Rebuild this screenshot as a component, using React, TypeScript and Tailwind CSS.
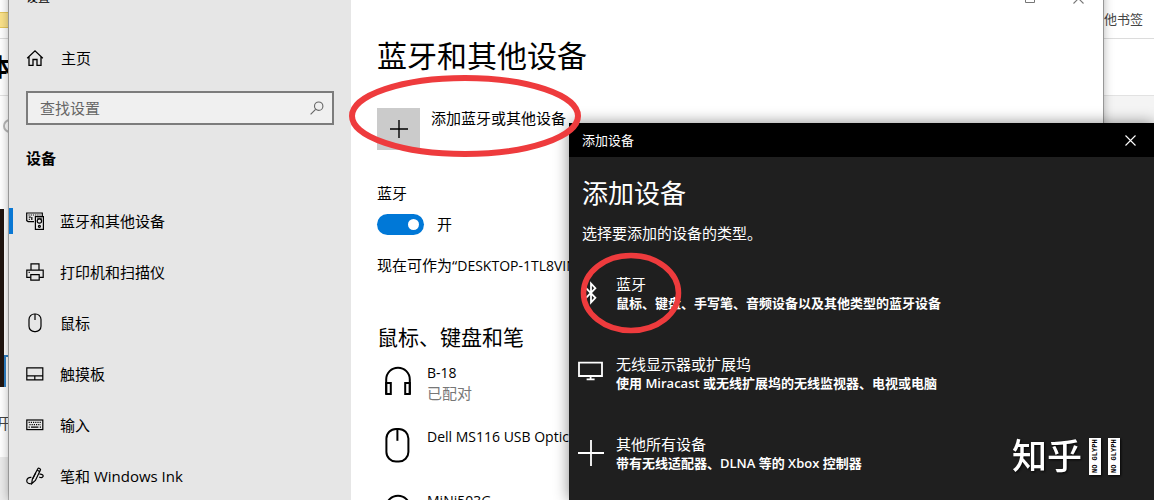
import { useState } from "react";
import type { ReactNode } from "react";

interface NavItem {
  label: string;
  icon: ReactNode;
}

interface DeviceType {
  title: string;
  detail: string;
  icon: ReactNode;
}

const line = { fill: "none", stroke: "currentColor" };

const HomeIcon = () => (
  <svg width="18" height="18" viewBox="0 0 18 18" {...line} strokeWidth="1.3">
    <path d="M1.2 9.2 9 1.8l7.8 7.4M3 7.8V16.3h4V10.5h4v5.8h4V7.8" />
  </svg>
);

const SearchIcon = () => (
  <svg width="14" height="14" viewBox="0 0 14 14" {...line} strokeWidth="1.1">
    <circle cx="8.7" cy="5.2" r="4.2" />
    <path d="M5.6 8.3.6 13.3" />
  </svg>
);

const DevicesIcon = () => (
  <svg width="18" height="18" viewBox="0 0 18 18" {...line} strokeWidth="1.2">
    <path d="M8 9.6H2.2L.7 8.6V1h15.6v3" />
    <path d="M2.5 3h12" strokeDasharray="1.2 1" />
    <path d="M2.8 5.2h2M2.8 7.4h1M5.8 5v3" />
    <rect x="9.4" y="4.6" width="8" height="12.8" />
    <circle cx="13.4" cy="9" r="2.2" />
    <circle cx="13.4" cy="14.3" r="1" />
    <path d="M11 6.2h5" strokeWidth=".8" />
  </svg>
);

const PrinterIcon = () => (
  <svg width="18" height="18" viewBox="0 0 18 18" {...line} strokeWidth="1.2">
    <path d="M5 7V.8h8V7" />
    <path d="M4.6 14.4H.8V7.2h16.4v7.2h-3.8" />
    <path d="M4.8 11.6h8.4v5.6H4.8z" />
    <path d="M2.6 9.4h1.2" />
  </svg>
);

const MouseIcon = () => (
  <svg width="14" height="20" viewBox="0 0 14 20" {...line} strokeWidth="1.2">
    <rect x="1" y="1" width="12" height="17.6" rx="5.4" />
    <path d="M7 1v6" />
  </svg>
);

const TouchpadIcon = () => (
  <svg width="18" height="14" viewBox="0 0 18 14" {...line} strokeWidth="1.2">
    <path d="M.8.8h16v12H.8zM.8 8.8h16M8.8 8.8v4" />
  </svg>
);

const KeyboardIcon = () => (
  <svg width="18" height="12" viewBox="0 0 18 12" {...line} strokeWidth="1.2">
    <rect x=".8" y="1" width="16" height="9.6" />
    <path d="M2.6 3.4h12.6M3.4 5.6h11.4" strokeDasharray="1.2 1" />
    <path d="M2.6 8.2h1.2M5 8.2h7.4M13.8 8.2H15" />
  </svg>
);

const PenIcon = () => (
  <svg width="18" height="18" viewBox="0 0 18 18" {...line} strokeWidth="1.2">
    <path d="M5.6 16.8 6.4 12 11.8 1.8c.7-1.2 3.2-.2 2.6 1.3L9.4 13.4 5.6 16.8Z" />
    <path d="m11.2 3.2 2.8 1.4M9.8 5.8l-3 6" />
    <path d="M5.4 10.4C2.6 10 .6 12 .8 14.2c.2 2 2.4 2.8 4 2.2M13.4 7.2c2.6-.4 4.2 1 3.6 2.4-.6 1.4-2.4 1.2-3.8.4" />
  </svg>
);

const HeadphonesIcon = () => (
  <svg width="28" height="30" viewBox="0 0 28 30" {...line} strokeWidth="2">
    <path d="M2.2 28V13.5a11.8 11.8 0 0 1 23.6 0V28" />
    <path d="M2.2 17h4.6v11H2.2zM21.2 17h4.6v11h-4.6z" />
  </svg>
);

const LargeMouseIcon = () => (
  <svg width="25" height="36" viewBox="0 0 25 36" {...line} strokeWidth="2">
    <rect x="1.4" y="2" width="22" height="32.6" rx="9.6" />
    <path d="M12.4 2v11.8" />
  </svg>
);

const BluetoothIcon = () => (
  <svg width="12" height="24" viewBox="0 0 12 24" {...line} strokeWidth="1.8">
    <path d="m.8 6.8 9.6 10L6 21.4V2.6l4.4 4.6L.8 17.2" />
  </svg>
);

const MonitorIcon = () => (
  <svg width="26" height="24" viewBox="0 0 26 24" {...line} strokeWidth="1.8">
    <path d="M1 1.6h23v13.4H1zM12.6 15v3.4M8.6 18.4h8" />
  </svg>
);

const PlusIcon = ({ size, weight }: { size: number; weight: number }) => (
  <svg width={size} height={size} viewBox="0 0 26 26" {...line} strokeWidth={weight}>
    <path d="M13 0v26M0 13h26" />
  </svg>
);

const CloseIcon = () => (
  <svg width="11" height="11" viewBox="0 0 11 11" {...line} strokeWidth="1.1">
    <path d="m.5.5 10 10M10.5.5l-10 10" />
  </svg>
);

const MaximizeIcon = () => (
  <svg width="10" height="10" viewBox="0 0 10 10" {...line}>
    <path d="M.5.5h9v9h-9z" />
  </svg>
);

const navItems: NavItem[] = [
  { label: "蓝牙和其他设备", icon: <DevicesIcon /> },
  { label: "打印机和扫描仪", icon: <PrinterIcon /> },
  { label: "鼠标", icon: <MouseIcon /> },
  { label: "触摸板", icon: <TouchpadIcon /> },
  { label: "输入", icon: <KeyboardIcon /> },
  { label: "笔和 Windows Ink", icon: <PenIcon /> },
];

const pairedDevices = [
  { name: "B-18", status: "已配对", icon: <HeadphonesIcon /> },
  { name: "Dell MS116 USB Optical Mouse", status: "", icon: <LargeMouseIcon /> },
  { name: "MiNi503G", status: "", icon: <HeadphonesIcon /> },
];

const deviceTypes: DeviceType[] = [
  {
    title: "蓝牙",
    detail: "鼠标、键盘、手写笔、音频设备以及其他类型的蓝牙设备",
    icon: <BluetoothIcon />,
  },
  {
    title: "无线显示器或扩展坞",
    detail: "使用 Miracast 或无线扩展坞的无线监视器、电视或电脑",
    icon: <MonitorIcon />,
  },
  {
    title: "其他所有设备",
    detail: "带有无线适配器、DLNA 等的 Xbox 控制器",
    icon: <PlusIcon size={26} weight={1.8} />,
  },
];

// Browser window that sits behind the settings window
const BrowserBackdrop = () => (
  <div className="flex h-full flex-col bg-white text-[#444]">
    <div className="flex h-[39px] shrink-0 items-center justify-between border-b border-[#dcdcdc] pr-[11px]">
      <div className="mt-[2px] h-4 w-5 border-y border-[#e5c65a] bg-[#fbe28a]" />
      <span className="text-[13px] leading-5">其他书签</span>
    </div>
    <div className="flex h-[57px] shrink-0 items-center border-b border-[#e2e2e2]">
      <span className="-ml-3 text-[24px] leading-8 font-bold text-black">本</span>
    </div>
    <div className="flex flex-1 justify-between">
      <div className="flex w-10 flex-col">
        <div className="mt-[23px] ml-[3px] h-[14px] w-[14px] rounded-full border-2 border-[#b8b8b8]" />
        <div className="mt-[76px] flex h-[178px] items-end">
          <div className="h-full w-[4px] bg-[#20140f]" />
          <div className="h-8 w-8 border-t-2 border-l-2 border-[#2f7fc4]" />
        </div>
        <span className="mt-[26px] -ml-[5px] text-[15px] leading-5">开</span>
        <div className="mt-[24px] flex-1 bg-[#ebebeb]" />
      </div>
      <div className="w-20 bg-[#f4f4f4]" />
    </div>
  </div>
);

const SettingsSidebar = () => (
  <aside className="flex w-[342px] shrink-0 flex-col bg-[#e6e6e6]">
    <div className="flex h-9 shrink-0 items-center px-[17px] text-xs">设置</div>
    <a href="#home" className="mt-[22px] flex h-10 shrink-0 items-center gap-[17px] px-[17px]">
      <HomeIcon />
      主页
    </a>
    <div className="mx-[17px] mt-[13px] flex h-[34px] shrink-0 items-center border-2 border-[#7c7c7c] bg-[#f0f0f0] pr-2 pl-3 text-[#666]">
      <input
        type="text"
        aria-label="查找设置"
        placeholder="查找设置"
        className="min-w-0 flex-1 bg-transparent outline-none placeholder:text-[#666]"
      />
      <SearchIcon />
    </div>
    <h2 className="mt-[23px] px-[17px] font-bold">设备</h2>
    <nav className="mt-[27px]">
      {navItems.map((item, index) => (
        <a key={item.label} href="#device" className="flex h-[51px] items-center">
          <span className={index === 0 ? "h-[26px] w-1 bg-[#0a78d4]" : "w-1"} />
          <span className="ml-[12px] flex w-5 justify-center">{item.icon}</span>
          <span className="ml-[15px]">{item.label}</span>
        </a>
      ))}
    </nav>
  </aside>
);

const SettingsContent = () => {
  const [bluetoothOn, setBluetoothOn] = useState(true);

  return (
    <main className="flex min-w-0 flex-1 flex-col whitespace-nowrap">
      <div className="flex h-9 shrink-0 items-center justify-end gap-[38px] pr-[19px] text-[#777]">
        <button type="button" aria-label="最大化">
          <MaximizeIcon />
        </button>
        <button type="button" aria-label="关闭">
          <CloseIcon />
        </button>
      </div>
      <div className="flex flex-col items-start pl-[26px]">
        <h1 className="mt-[20px] text-[30px] leading-10">蓝牙和其他设备</h1>
        <button type="button" className="mt-[32px] flex items-start gap-[11px]">
          <span className="flex h-[42px] w-[43px] items-center justify-center bg-[#cbcbcb]">
            <PlusIcon size={18} weight={2} />
          </span>
          <span>添加蓝牙或其他设备</span>
        </button>
        <label htmlFor="bluetooth" className="mt-[33px]">
          蓝牙
        </label>
        <div className="mt-[10px] flex h-[22px] items-center gap-[13px]">
          <input
            id="bluetooth"
            type="checkbox"
            role="switch"
            checked={bluetoothOn}
            onChange={(e) => setBluetoothOn(e.target.checked)}
            className="flex h-[21px] w-[47px] appearance-none items-center rounded-full bg-[#8a8a8a] px-[5px] before:h-[11px] before:w-[11px] before:rounded-full before:bg-white checked:justify-end checked:bg-[#0078d7]"
          />
          <span>{bluetoothOn ? "开" : "关"}</span>
        </div>
        <p className="mt-[20px]">
          现在可作为“<span className="text-sm leading-5">DESKTOP-1TL8VIN</span>”被发现
        </p>
        <h2 className="mt-[47px] text-[21px] leading-7">鼠标、键盘和笔</h2>
        <ul className="mt-[12px]">
          {pairedDevices.map((device) => (
            <li key={device.name} className="flex h-16 items-start gap-[9px]">
              <span className="flex h-9 w-[41px] items-center justify-center">{device.icon}</span>
              <div>
                <p className="text-sm leading-5">{device.name}</p>
                <p className="text-[#777]">{device.status}</p>
              </div>
            </li>
          ))}
        </ul>
      </div>
    </main>
  );
};

const AddDeviceDialog = () => (
  <section className="absolute top-[123px] right-0 bottom-0 left-[569px] overflow-hidden bg-[#1f1f1f] text-white shadow-[0_0_14px_rgba(0,0,0,0.45)]">
    <div className="flex h-[34px] items-center justify-between bg-black pr-[18px] pl-[13px] text-[13px]">
      <span>添加设备</span>
      <button type="button" aria-label="关闭">
        <CloseIcon />
      </button>
    </div>
    <h1 className="mt-[18px] pl-[13px] text-[26px] leading-9">添加设备</h1>
    <p className="mt-[12px] pl-[13px]">选择要添加的设备的类型。</p>
    <div className="mt-[10px]">
      {deviceTypes.map((type) => (
        <button
          key={type.title}
          type="button"
          className="flex h-20 w-full items-center gap-3 pl-[9px] text-left whitespace-nowrap"
        >
          <span className="flex w-[26px] justify-center">{type.icon}</span>
          <span className="flex flex-col">
            <span>{type.title}</span>
            <span className="text-[13px] leading-[18px] font-semibold">{type.detail}</span>
          </span>
        </button>
      ))}
    </div>
    <div className="absolute right-[34px] bottom-[24px] flex items-center gap-[7px] drop-shadow-[1px_1px_1px_rgba(0,0,0,0.8)]">
      <span className="text-[35px] leading-10 font-medium">知乎</span>
      {[0, 1].map((n) => (
        <span
          key={n}
          className="flex h-[37px] w-[12px] rotate-180 items-center justify-center bg-white font-['Liberation_Mono',monospace] text-[7px] leading-[12px] font-bold text-black [writing-mode:vertical-rl]"
        >
          NO GLYPH
        </span>
      ))}
    </div>
  </section>
);

// Hand-drawn red rings that point at the two places to click
const Highlights = () => (
  <>
    <svg className="pointer-events-none absolute top-[74px] left-[349px]" width="232" height="84" viewBox="0 0 232 84">
      <ellipse cx="116" cy="42" rx="113" ry="38" fill="none" stroke="#ee3b3d" strokeWidth="6" />
    </svg>
    <svg className="pointer-events-none absolute top-[252px] left-[580px]" width="102" height="82" viewBox="0 0 102 82">
      <ellipse cx="51" cy="41" rx="47.5" ry="37.5" fill="none" stroke="#ee3b3d" strokeWidth="5.5" />
    </svg>
  </>
);

const App = () => {
  return (
    <div className="relative h-screen overflow-hidden font-['Open_Sans','Noto_Sans_CJK_SC',sans-serif] text-[15px] leading-5 text-black">
      <BrowserBackdrop />
      <div className="absolute -top-5 right-[51px] bottom-0 left-[9px] flex overflow-hidden bg-white shadow-[0_0_10px_rgba(0,0,0,0.35),0_0_0_1px_#b4b4b4]">
        <SettingsSidebar />
        <SettingsContent />
      </div>
      <AddDeviceDialog />
      <Highlights />
    </div>
  );
};

export default App;
